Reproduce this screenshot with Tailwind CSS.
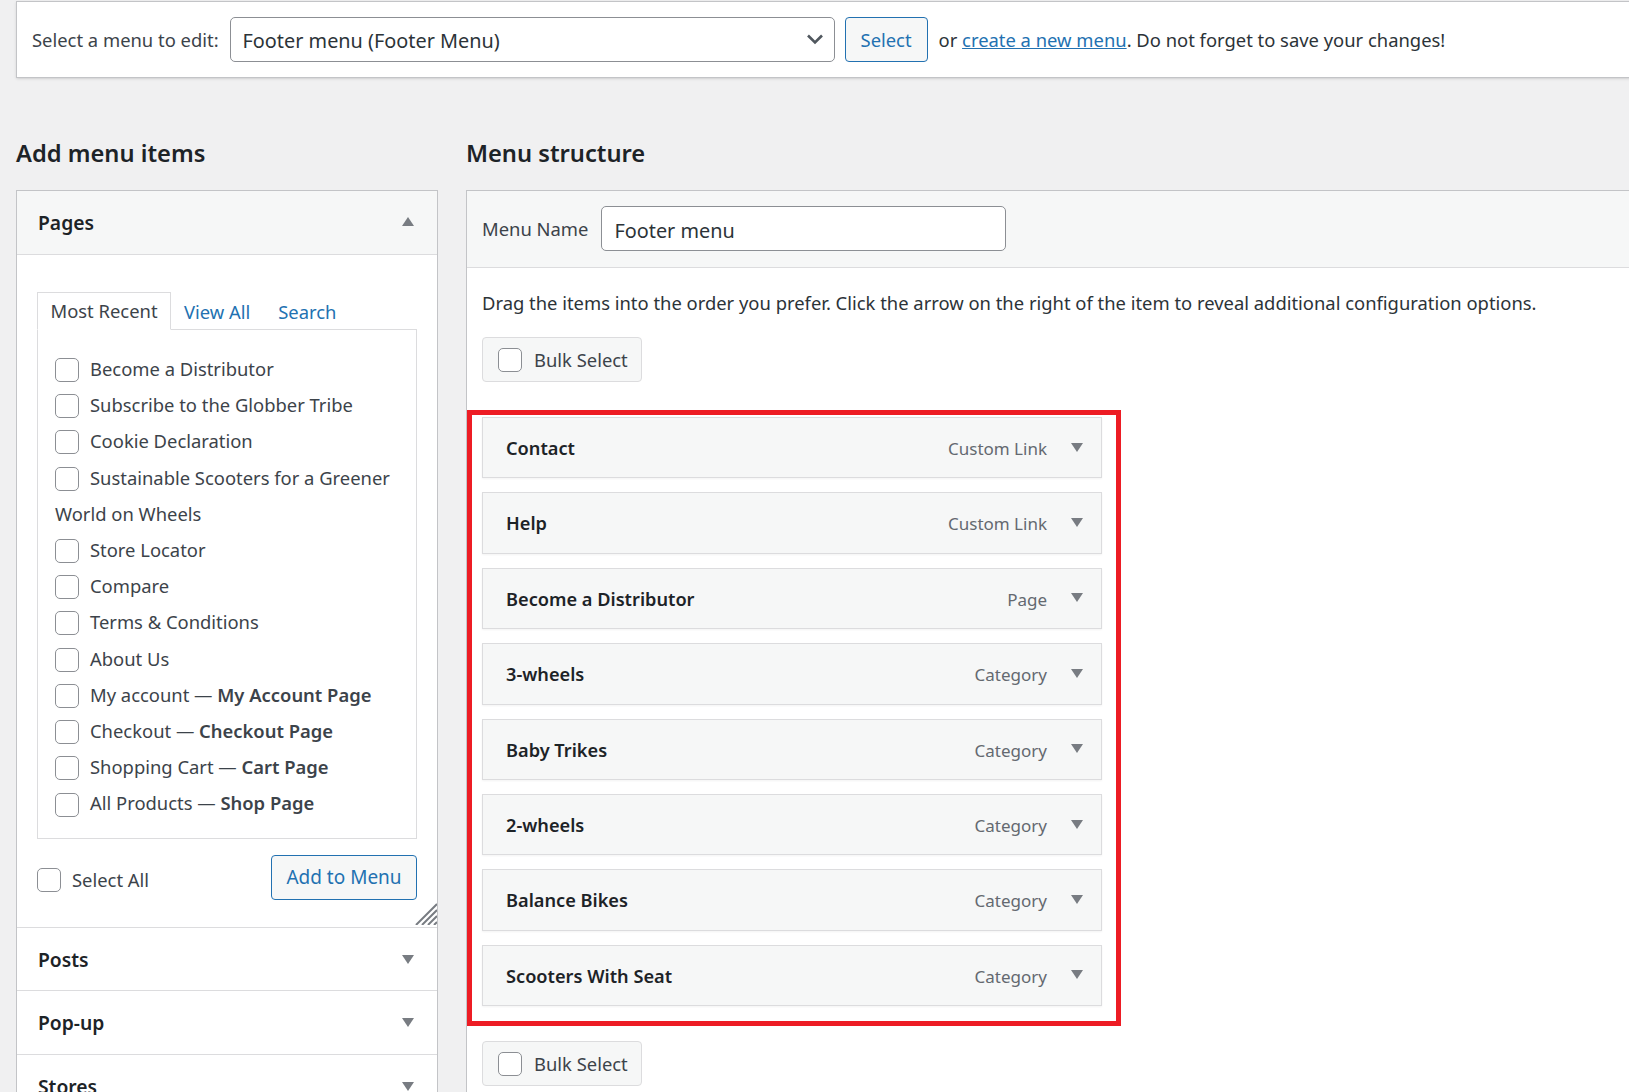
<!DOCTYPE html>
<html lang="en">
<head>
  <meta charset="UTF-8" />
  <title>Menus</title>
  <script src="https://cdn.jsdelivr.net/npm/@tailwindcss/browser@4"></script>
</head>
<body class="bg-[#f0f0f1] h-screen overflow-hidden text-[18.4px] text-[#3c434a] font-['Noto_Sans',sans-serif]">

  <!-- select a menu bar -->
  <div class="ml-4 -mr-2 mt-px h-[77px] bg-white border border-[#c3c4c7] flex items-center pl-[15px] shadow-sm">
    <span class="mr-[11px]">Select a menu to edit:</span>
    <div class="w-[605px] h-[45px] border border-[#8c8f94] rounded-[5px] bg-white flex items-center justify-between pl-[12px] pr-[10px] pt-[2px] text-[19.85px] text-[#2c3338]">
      Footer menu (Footer Menu)
      <svg width="18" height="11" viewBox="0 0 18 11" fill="none" stroke="#50575e" stroke-width="2.6" class="mb-[2px]"><path d="M2 1.5 9 8.5l7-7"/></svg>
    </div>
    <button class="ml-[10px] w-[83px] h-[45px] border border-[#2271b1] rounded-[4px] bg-[#f6f7f7] text-[#2271b1]">Select</button>
    <span class="ml-[11px] text-[#2c3338]">or <a href="#" class="text-[#2271b1] underline">create a new menu</a>. Do not forget to save your changes!</span>
  </div>

  <div class="flex mt-[58px] pl-4 -mr-2">
    <!-- left column -->
    <div class="w-[422px] shrink-0">
      <h2 class="text-[23.7px] font-semibold text-[#1d2327] leading-[34px]">Add menu items</h2>
      <div class="mt-[20px] bg-white border border-[#c3c4c7] h-[1000px]">
        <div class="h-[64px] bg-[#f6f7f7] border-b border-[#dcdcde] flex items-center justify-between pl-[21px] pr-[23px]">
          <span class="text-[19.3px] font-semibold text-[#1d2327] pt-[2px]">Pages</span>
          <svg width="12" height="9" viewBox="0 0 12 9" class="mb-[3px]"><path d="M6 0l6 9H0z" fill="#787c82"/></svg>
        </div>
        <div class="px-5 pt-[37px] h-[672px] relative">
          <div class="flex h-[38px] relative z-10">
            <div class="w-[134px] h-[38px] border border-[#dcdcde] border-b-white bg-white flex items-center justify-center">Most Recent</div>
            <a href="#" class="ml-[13px] leading-[39px] text-[#2271b1]">View All</a>
            <a href="#" class="ml-[28px] leading-[39px] text-[#2271b1]">Search</a>
          </div>
          <div class="-mt-px h-[510px] border border-[#dcdcde] pl-[17px] pr-[10px] pt-[21px]">
            <ul class="leading-[36.2px]">
              <li><input type="checkbox" class="appearance-none w-6 h-6 border border-[#8c8f94] rounded-[5px] bg-white align-middle mb-[2px] mr-[11px]" />Become a Distributor</li>
              <li><input type="checkbox" class="appearance-none w-6 h-6 border border-[#8c8f94] rounded-[5px] bg-white align-middle mb-[2px] mr-[11px]" />Subscribe to the Globber Tribe</li>
              <li><input type="checkbox" class="appearance-none w-6 h-6 border border-[#8c8f94] rounded-[5px] bg-white align-middle mb-[2px] mr-[11px]" />Cookie Declaration</li>
              <li><input type="checkbox" class="appearance-none w-6 h-6 border border-[#8c8f94] rounded-[5px] bg-white align-middle mb-[2px] mr-[11px]" />Sustainable Scooters for a Greener World on Wheels</li>
              <li><input type="checkbox" class="appearance-none w-6 h-6 border border-[#8c8f94] rounded-[5px] bg-white align-middle mb-[2px] mr-[11px]" />Store Locator</li>
              <li><input type="checkbox" class="appearance-none w-6 h-6 border border-[#8c8f94] rounded-[5px] bg-white align-middle mb-[2px] mr-[11px]" />Compare</li>
              <li><input type="checkbox" class="appearance-none w-6 h-6 border border-[#8c8f94] rounded-[5px] bg-white align-middle mb-[2px] mr-[11px]" />Terms &amp; Conditions</li>
              <li><input type="checkbox" class="appearance-none w-6 h-6 border border-[#8c8f94] rounded-[5px] bg-white align-middle mb-[2px] mr-[11px]" />About Us</li>
              <li><input type="checkbox" class="appearance-none w-6 h-6 border border-[#8c8f94] rounded-[5px] bg-white align-middle mb-[2px] mr-[11px]" />My account — <b class="font-semibold">My Account Page</b></li>
              <li><input type="checkbox" class="appearance-none w-6 h-6 border border-[#8c8f94] rounded-[5px] bg-white align-middle mb-[2px] mr-[11px]" />Checkout — <b class="font-semibold">Checkout Page</b></li>
              <li><input type="checkbox" class="appearance-none w-6 h-6 border border-[#8c8f94] rounded-[5px] bg-white align-middle mb-[2px] mr-[11px]" />Shopping Cart — <b class="font-semibold">Cart Page</b></li>
              <li><input type="checkbox" class="appearance-none w-6 h-6 border border-[#8c8f94] rounded-[5px] bg-white align-middle mb-[2px] mr-[11px]" />All Products — <b class="font-semibold">Shop Page</b></li>
            </ul>
          </div>
          <div class="mt-[16px] flex items-start justify-between">
            <label class="flex items-center mt-[11px]"><input type="checkbox" class="appearance-none w-6 h-6 border border-[#8c8f94] rounded-[5px] bg-white mr-[11px]" />Select All</label>
            <button class="w-[146px] h-[45px] border border-[#2271b1] rounded-[4px] bg-[#f6f7f7] text-[#2271b1] text-[19px]">Add to Menu</button>
          </div>
          <svg width="22" height="22" viewBox="0 0 22 22" class="absolute right-0 bottom-[2px]" fill="none" stroke="#787c82" stroke-width="2"><path d="M1 22 22 1M7 22 22 7M13 22l9-9M19 22l3-3"/></svg>
        </div>
        <div class="h-[64px] border-y border-[#dcdcde] flex items-center justify-between pl-[21px] pr-[23px]">
          <span class="text-[19.3px] font-semibold text-[#1d2327] pt-[2px]">Posts</span>
          <svg width="12" height="9" viewBox="0 0 12 9"><path d="M0 0h12L6 9z" fill="#787c82"/></svg>
        </div>
        <div class="h-[64px] border-b border-[#dcdcde] flex items-center justify-between pl-[21px] pr-[23px]">
          <span class="text-[19.3px] font-semibold text-[#1d2327] pt-[2px]">Pop-up</span>
          <svg width="12" height="9" viewBox="0 0 12 9"><path d="M0 0h12L6 9z" fill="#787c82"/></svg>
        </div>
        <div class="h-[64px] border-b border-[#dcdcde] flex items-center justify-between pl-[21px] pr-[23px]">
          <span class="text-[19.3px] font-semibold text-[#1d2327] pt-[2px]">Stores</span>
          <svg width="12" height="9" viewBox="0 0 12 9"><path d="M0 0h12L6 9z" fill="#787c82"/></svg>
        </div>
      </div>
    </div>

    <!-- right column -->
    <div class="ml-[28px] flex-1">
      <h2 class="text-[23.7px] font-semibold text-[#1d2327] leading-[34px]">Menu structure</h2>
      <div class="mt-[20px] bg-white border border-[#c3c4c7] h-[1000px] relative">
        <div class="h-[77px] bg-[#f6f7f7] border-b border-[#dcdcde] flex items-center pl-[15px]">
          <span>Menu Name</span>
          <div class="ml-[13px] mb-[2px] w-[405px] h-[45px] border border-[#8c8f94] rounded-[5px] bg-white flex items-center pl-[12px] pt-[6px] text-[19.85px] text-[#2c3338]">Footer menu</div>
        </div>
        <div class="pl-[15px] pr-[10px]">
          <p class="pt-[20px] leading-[29px] text-[#2c3338]">Drag the items into the order you prefer. Click the arrow on the right of the item to reveal additional configuration options.</p>
          <div class="mt-[20px] w-[160px] h-[45px] border border-[#dcdcde] rounded-[4px] bg-[#f6f7f7] flex items-center pl-[15px]">
            <input type="checkbox" class="appearance-none w-6 h-6 border border-[#8c8f94] rounded-[5px] bg-white mr-[12px]" />Bulk Select
          </div>
          <ul class="mt-[35px] w-[620px]">
            <li class="h-[61.4px] mb-[14px] bg-[#f6f7f7] border border-[#dcdcde] shadow-xs flex items-center pl-[23px] pr-[18px]">
              <span class="font-semibold text-[18.2px] text-[#1d2327] flex-1 pt-[2px]">Contact</span><span class="text-[17px] text-[#646970] pt-[2px]">Custom Link</span><svg width="12" height="9" viewBox="0 0 12 9" class="ml-[24px] mb-[1px]"><path d="M0 0h12L6 9z" fill="#787c82"/></svg>
            </li>
            <li class="h-[61.4px] mb-[14px] bg-[#f6f7f7] border border-[#dcdcde] shadow-xs flex items-center pl-[23px] pr-[18px]">
              <span class="font-semibold text-[18.2px] text-[#1d2327] flex-1 pt-[2px]">Help</span><span class="text-[17px] text-[#646970] pt-[2px]">Custom Link</span><svg width="12" height="9" viewBox="0 0 12 9" class="ml-[24px] mb-[1px]"><path d="M0 0h12L6 9z" fill="#787c82"/></svg>
            </li>
            <li class="h-[61.4px] mb-[14px] bg-[#f6f7f7] border border-[#dcdcde] shadow-xs flex items-center pl-[23px] pr-[18px]">
              <span class="font-semibold text-[18.2px] text-[#1d2327] flex-1 pt-[2px]">Become a Distributor</span><span class="text-[17px] text-[#646970] pt-[2px]">Page</span><svg width="12" height="9" viewBox="0 0 12 9" class="ml-[24px] mb-[1px]"><path d="M0 0h12L6 9z" fill="#787c82"/></svg>
            </li>
            <li class="h-[61.4px] mb-[14px] bg-[#f6f7f7] border border-[#dcdcde] shadow-xs flex items-center pl-[23px] pr-[18px]">
              <span class="font-semibold text-[18.2px] text-[#1d2327] flex-1 pt-[2px]">3-wheels</span><span class="text-[17px] text-[#646970] pt-[2px]">Category</span><svg width="12" height="9" viewBox="0 0 12 9" class="ml-[24px] mb-[1px]"><path d="M0 0h12L6 9z" fill="#787c82"/></svg>
            </li>
            <li class="h-[61.4px] mb-[14px] bg-[#f6f7f7] border border-[#dcdcde] shadow-xs flex items-center pl-[23px] pr-[18px]">
              <span class="font-semibold text-[18.2px] text-[#1d2327] flex-1 pt-[2px]">Baby Trikes</span><span class="text-[17px] text-[#646970] pt-[2px]">Category</span><svg width="12" height="9" viewBox="0 0 12 9" class="ml-[24px] mb-[1px]"><path d="M0 0h12L6 9z" fill="#787c82"/></svg>
            </li>
            <li class="h-[61.4px] mb-[14px] bg-[#f6f7f7] border border-[#dcdcde] shadow-xs flex items-center pl-[23px] pr-[18px]">
              <span class="font-semibold text-[18.2px] text-[#1d2327] flex-1 pt-[2px]">2-wheels</span><span class="text-[17px] text-[#646970] pt-[2px]">Category</span><svg width="12" height="9" viewBox="0 0 12 9" class="ml-[24px] mb-[1px]"><path d="M0 0h12L6 9z" fill="#787c82"/></svg>
            </li>
            <li class="h-[61.4px] mb-[14px] bg-[#f6f7f7] border border-[#dcdcde] shadow-xs flex items-center pl-[23px] pr-[18px]">
              <span class="font-semibold text-[18.2px] text-[#1d2327] flex-1 pt-[2px]">Balance Bikes</span><span class="text-[17px] text-[#646970] pt-[2px]">Category</span><svg width="12" height="9" viewBox="0 0 12 9" class="ml-[24px] mb-[1px]"><path d="M0 0h12L6 9z" fill="#787c82"/></svg>
            </li>
            <li class="h-[61.4px] mb-[14px] bg-[#f6f7f7] border border-[#dcdcde] shadow-xs flex items-center pl-[23px] pr-[18px]">
              <span class="font-semibold text-[18.2px] text-[#1d2327] flex-1 pt-[2px]">Scooters With Seat</span><span class="text-[17px] text-[#646970] pt-[2px]">Category</span><svg width="12" height="9" viewBox="0 0 12 9" class="ml-[24px] mb-[1px]"><path d="M0 0h12L6 9z" fill="#787c82"/></svg>
            </li>
          </ul>
          <div class="mt-[35px] w-[160px] h-[45px] border border-[#dcdcde] rounded-[4px] bg-[#f6f7f7] flex items-center pl-[15px]">
            <input type="checkbox" class="appearance-none w-6 h-6 border border-[#8c8f94] rounded-[5px] bg-white mr-[12px]" />Bulk Select
          </div>
        </div>
        <!-- red highlight drawn over the list -->
        <div class="absolute left-0 top-[219px] w-[654px] h-[616px] border-[5px] border-[#ed1c24]"></div>
      </div>
    </div>
  </div>
</body>
</html>
